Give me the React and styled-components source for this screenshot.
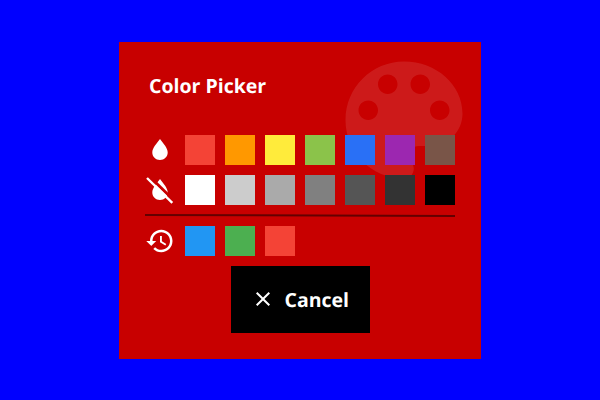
import React from "react";
import styled, { createGlobalStyle } from "styled-components";

const GlobalStyle = createGlobalStyle`
  * { box-sizing: border-box; }
  html, body { margin: 0; padding: 0; }
  body { background: #0000ff; font-family: "Open Sans", sans-serif; color: #fff; }
`;

const Page = styled.main`
  width: 600px;
  height: 400px;
  padding-top: 42px;
  display: flex;
  justify-content: center;
  align-items: flex-start;
  background: #0000ff;
`;

const Dialog = styled.section`
  position: relative;
  width: 362px;
  height: 317px;
  padding: 26px;
  background: #c80000;
  display: flex;
  flex-direction: column;
  overflow: hidden;
`;

const Watermark = styled.svg`
  position: absolute;
  top: 0;
  right: -1px;
  width: 156px;
  height: 156px;
  fill: #fff;
  opacity: 0.1;
`;

const Title = styled.h1`
  position: relative;
  margin: 0 0 29px 4px;
  height: 38px;
  line-height: 36px;
  font-size: 19.5px;
  font-weight: 700;
  text-rendering: geometricPrecision;
`;

const Row = styled.div`
  position: relative;
  display: flex;
  gap: 10px;
  height: 30px;
  margin-bottom: ${(p) => p.$gap}px;
`;

const RowIcon = styled.svg`
  width: 30px;
  height: 30px;
  fill: #fff;
`;

const Swatch = styled.button`
  width: 30px;
  height: 30px;
  padding: 0;
  border: 0;
  background: ${(p) => p.$color};
`;

const Divider = styled.svg`
  display: block;
  width: 310px;
  height: 4px;
  margin-bottom: 9px;
  fill: #640000;
`;

const CancelButton = styled.button`
  align-self: center;
  flex: none;
  display: flex;
  align-items: center;
  gap: 10px;
  width: 139px;
  height: 67px;
  padding: 0 20px;
  border: 0;
  background: #000;
  color: #fff;
  font: 700 19.5px/27px "Open Sans", sans-serif;
  text-rendering: geometricPrecision;
`;

const CloseIcon = styled.svg`
  width: 24px;
  height: 24px;
  flex: none;
  margin-bottom: 2px;
  fill: #fff;
`;

const bright = ["#f44336", "#ff9800", "#ffeb3b", "#8bc34a", "#2970f6", "#9c27b0", "#795548"];
const grays = ["#ffffff", "#cccccc", "#aaaaaa", "#808080", "#555555", "#333333", "#000000"];
const recent = ["#2196f3", "#4caf50", "#f44336"];

const swatches = (colors) => colors.map((c) => <Swatch key={c} $color={c} aria-label={c} />);

export default function App() {
  return (
    <Page>
      <GlobalStyle />
      <Dialog>
        <Watermark viewBox="0 0 24 24">
          <path d="M12 3c-4.97 0-9 4.03-9 9s4.03 9 9 9c.83 0 1.5-.67 1.5-1.5 0-.39-.15-.74-.39-1.01-.23-.26-.38-.61-.38-.99 0-.83.67-1.5 1.5-1.5H16c2.76 0 5-2.24 5-5 0-4.42-4.03-8-9-8zm-5.5 9c-.83 0-1.5-.67-1.5-1.5S5.67 9 6.5 9 8 9.67 8 10.5 7.33 12 6.5 12zm3-4C8.67 8 8 7.33 8 6.5S8.67 5 9.5 5s1.5.67 1.5 1.5S10.33 8 9.5 8zm5 0c-.83 0-1.5-.67-1.5-1.5S13.67 5 14.5 5s1.5.67 1.5 1.5S15.33 8 14.5 8zm3 4c-.83 0-1.5-.67-1.5-1.5S16.67 9 17.5 9s1.5.67 1.5 1.5-.67 1.5-1.5 1.5z" />
        </Watermark>
        <Title>Color Picker</Title>
        <Row $gap={10}>
          <RowIcon viewBox="0 0 30 30">
            <path d="M15 4C11.5 8.6 7.3 13.2 7.3 17.5C7.3 21.8 10.7 25 15 25S22.7 21.8 22.7 17.5C22.7 13.2 18.5 8.6 15 4Z" />
          </RowIcon>
          {swatches(bright)}
        </Row>
        <Row $gap={8}>
          <RowIcon viewBox="0 0 30 30">
            <path d="M15 4C11.5 8.6 7.3 13.2 7.3 17.5C7.3 21.8 10.7 25 15 25S22.7 21.8 22.7 17.5C22.7 13.2 18.5 8.6 15 4Z" />
            <path d="M4 .9L30 26.4" stroke="#c80000" strokeWidth="2.8" />
            <path d="M2 3L27.3 27.8" stroke="#fff" strokeWidth="2.4" />
          </RowIcon>
          {swatches(grays)}
        </Row>
        <Divider viewBox="0 0 310 4">
          <path d="M0 1L310 2V4L0 3Z" />
        </Divider>
        <Row $gap={10}>
          <RowIcon viewBox="0 0 24 24">
            <path d="M13 3c-4.97 0-9 4.03-9 9H1l3.89 3.89.07.14L9 12H6c0-3.87 3.13-7 7-7s7 3.13 7 7-3.13 7-7 7c-1.93 0-3.68-.79-4.94-2.06l-1.42 1.42C8.27 19.99 10.51 21 13 21c4.97 0 9-4.03 9-9s-4.03-9-9-9zm-1 5v5l4.28 2.54.72-1.21-3.5-2.08V8H12z" />
          </RowIcon>
          {swatches(recent)}
        </Row>
        <CancelButton>
          <CloseIcon viewBox="0 0 24 24">
            <path d="M19 6.41L17.59 5 12 10.59 6.41 5 5 6.41 10.59 12 5 17.59 6.41 19 12 13.41 17.59 19 19 17.59 13.41 12z" />
          </CloseIcon>
          Cancel
        </CancelButton>
      </Dialog>
    </Page>
  );
}
